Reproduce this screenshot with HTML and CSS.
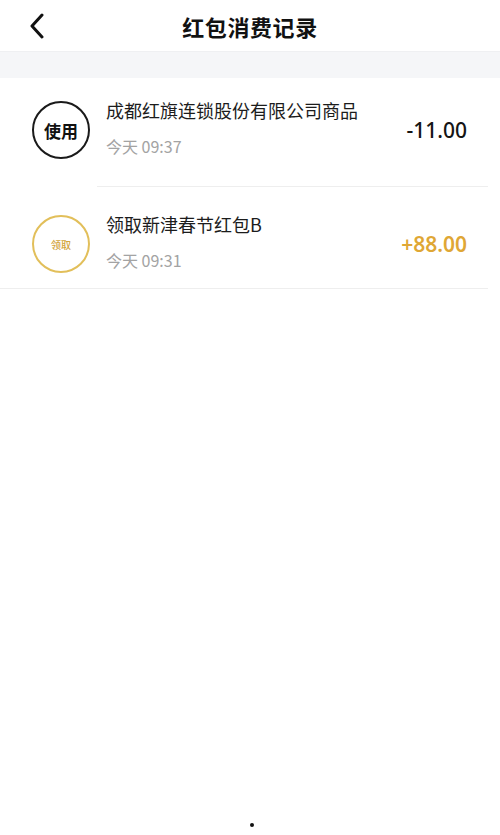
FILE: index.html
```html
<!DOCTYPE html>
<html lang="zh-CN">
<head>
<meta charset="utf-8">
<title>红包消费记录</title>
<link rel="stylesheet" href="styles.css">
</head>
<body>
<div class="page">
  <header class="topbar">
    <div class="back">
      <svg width="18" height="26" viewBox="0 0 18 26"><path d="M14 2 L4 13 L14 24" fill="none" stroke="#111" stroke-width="3" stroke-linecap="round" stroke-linejoin="round"/></svg>
    </div>
    <h1 class="title">红包消费记录</h1>
    <div class="spacer"></div>
  </header>
  <div class="band"></div>
  <ul class="list">
    <li class="row row-first">
      <div class="badge badge-use">使用</div>
      <div class="info">
        <div class="name">成都红旗连锁股份有限公司商品</div>
        <div class="time">今天 09:37</div>
      </div>
      <div class="amount">-11.00</div>
    </li>
    <li class="sep sep-inset"></li>
    <li class="row row-second">
      <div class="badge badge-get">领取</div>
      <div class="info">
        <div class="name">领取新津春节红包B</div>
        <div class="time">今天 09:31</div>
      </div>
      <div class="amount amount-plus">+88.00</div>
    </li>
    <li class="sep"></li>
  </ul>
  <div class="fill"></div>
  <div class="dot-wrap"><span class="dot"></span></div>
</div>
</body>
</html>
```
FILE: styles.css
```css
html, body {
  margin: 0;
  padding: 0;
  background: #fff;
}
body {
  font-family: "Noto Sans CJK SC", "Noto Sans", "Liberation Sans", sans-serif;
  color: #1a1a1a;
}
.page {
  width: 500px;
  height: 835px;
  display: flex;
  flex-direction: column;
  overflow: hidden;
}
.topbar {
  height: 51px;
  display: grid;
  grid-template-columns: 1fr auto 1fr;
  align-items: center;
}
.back {
  padding-left: 28px;
  display: flex;
  align-items: center;
}
.title {
  margin: 0;
  font-size: 22px;
  font-weight: 700;
  letter-spacing: 0.6px;
  color: #111;
  line-height: 1;
}
.band {
  height: 27px;
  background: #f5f6f8;
  border-top: 1px solid #eff0f2;
  box-sizing: border-box;
}
.list {
  list-style: none;
  margin: 0;
  padding: 0;
}
.row {
  display: flex;
  align-items: center;
  padding-left: 32px;
  padding-right: 33px;
}
.row-first {
  padding-top: 23px;
  padding-bottom: 27px;
}
.row-second {
  padding-top: 28px;
  padding-bottom: 15px;
}
.badge {
  width: 58px;
  height: 58px;
  box-sizing: border-box;
  border-radius: 50%;
  display: flex;
  align-items: center;
  justify-content: center;
  flex: none;
}
.badge-use {
  border: 2px solid #1a1a1a;
  font-size: 17px;
  font-weight: 700;
  color: #111;
}
.badge-get {
  border: 2px solid #e2bf5a;
  font-size: 10px;
  font-weight: 500;
  color: #d2a43a;
}
.info {
  margin-left: 16px;
  margin-top: -6px;
  flex: 1;
  display: flex;
  flex-direction: column;
  gap: 12px;
}
.name {
  font-size: 18px;
  line-height: 26px;
  color: #1c1c1c;
}
.time {
  font-size: 16px;
  line-height: 22px;
  color: #a3a3a3;
}
.amount {
  font-family: "Noto Sans", "Liberation Sans", sans-serif;
  font-size: 21px;
  font-weight: 500;
  color: #151515;
}
.amount-plus {
  color: #dfa735;
  font-weight: 600;
}
.sep {
  height: 1px;
  background: #eeeeee;
  margin-right: 12px;
}
.sep-inset {
  margin-left: 97px;
}
.fill {
  flex: 1;
}
.dot-wrap {
  height: 12px;
  display: flex;
  justify-content: center;
  padding-left: 4px;
}
.dot {
  width: 4px;
  height: 4px;
  border-radius: 50%;
  background: #111;
}
```
